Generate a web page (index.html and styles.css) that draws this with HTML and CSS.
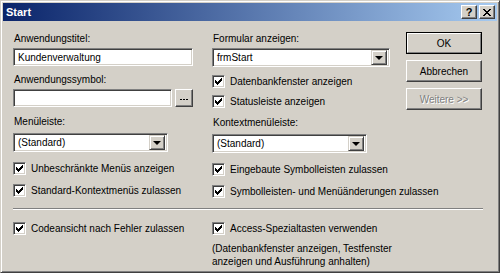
FILE: index.html
```html
<!DOCTYPE html>
<html>
<head>
  <meta charset="UTF-8">
  <title>Start</title>
  <link rel="stylesheet" href="styles.css">
</head>
<body>
<div class="window">
  <div class="titlebar">
    <span class="title">Start</span>
    <div class="caption-buttons">
      <span class="cap">?</span>
      <span class="cap">
        <svg width="8" height="7" viewBox="0 0 8 7" shape-rendering="crispEdges"><path d="M0 0h2v1h-2z M6 0h2v1h-2z M1 1h2v1h-2z M5 1h2v1h-2z M2 2h4v1h-4z M3 3h2v1h-2z M2 4h4v1h-4z M1 5h2v1h-2z M5 5h2v1h-2z M0 6h2v1h-2z M6 6h2v1h-2z" fill="#000"/></svg>
      </span>
    </div>
  </div>

  <div class="content">
    <div class="top">
      <div class="form">
        <div class="col">
          <label class="lbl">Anwendungstitel:</label>
          <input class="field mt3" type="text" value="Kundenverwaltung">
          <label class="lbl mt7">Anwendungssymbol:</label>
          <div class="browse-row mt3">
            <input class="field field-short" type="text" value="">
            <span class="btn btn-small"><svg width="8" height="1" viewBox="0 0 8 1" shape-rendering="crispEdges"><path d="M0 0h2v1H0z M3 0h2v1H3z M6 0h2v1H6z"/></svg></span>
          </div>
          <label class="lbl mt8">Menüleiste:</label>
          <div class="combo combo-short mt5"><span class="combo-text">(Standard)</span><span class="drop"><i class="arrow"></i></span></div>
          <div class="chk mt10"><span class="box"><svg width="11" height="11" viewBox="1 1 11 11" shape-rendering="crispEdges"><path d="M9 3h1v1H9z M8 4h2v1H8z M3 5h1v1H3z M7 5h3v1H7z M3 6h2v1H3z M6 6h3v1H6z M3 7h5v1H3z M4 8h3v1H4z M5 9h1v1H5z"/></svg></span>Unbeschränkte Menüs anzeigen</div>
          <div class="chk mt9"><span class="box"><svg width="11" height="11" viewBox="1 1 11 11" shape-rendering="crispEdges"><path d="M9 3h1v1H9z M8 4h2v1H8z M3 5h1v1H3z M7 5h3v1H7z M3 6h2v1H3z M6 6h3v1H6z M3 7h5v1H3z M4 8h3v1H4z M5 9h1v1H5z"/></svg></span>Standard-Kontextmenüs zulassen</div>
        </div>
        <div class="col">
          <label class="lbl">Formular anzeigen:</label>
          <div class="combo mt3"><span class="combo-text">frmStart</span><span class="drop"><i class="arrow"></i></span></div>
          <div class="chk mt8"><span class="box"><svg width="11" height="11" viewBox="1 1 11 11" shape-rendering="crispEdges"><path d="M9 3h1v1H9z M8 4h2v1H8z M3 5h1v1H3z M7 5h3v1H7z M3 6h2v1H3z M6 6h3v1H6z M3 7h5v1H3z M4 8h3v1H4z M5 9h1v1H5z"/></svg></span>Datenbankfenster anzeigen</div>
          <div class="chk mt7"><span class="box"><svg width="11" height="11" viewBox="1 1 11 11" shape-rendering="crispEdges"><path d="M9 3h1v1H9z M8 4h2v1H8z M3 5h1v1H3z M7 5h3v1H7z M3 6h2v1H3z M6 6h3v1H6z M3 7h5v1H3z M4 8h3v1H4z M5 9h1v1H5z"/></svg></span>Statusleiste anzeigen</div>
          <label class="lbl mt8">Kontextmenüleiste:</label>
          <div class="combo combo-short mt5"><span class="combo-text">(Standard)</span><span class="drop"><i class="arrow"></i></span></div>
          <div class="chk mt10"><span class="box"><svg width="11" height="11" viewBox="1 1 11 11" shape-rendering="crispEdges"><path d="M9 3h1v1H9z M8 4h2v1H8z M3 5h1v1H3z M7 5h3v1H7z M3 6h2v1H3z M6 6h3v1H6z M3 7h5v1H3z M4 8h3v1H4z M5 9h1v1H5z"/></svg></span>Eingebaute Symbolleisten zulassen</div>
          <div class="chk mt9"><span class="box"><svg width="11" height="11" viewBox="1 1 11 11" shape-rendering="crispEdges"><path d="M9 3h1v1H9z M8 4h2v1H8z M3 5h1v1H3z M7 5h3v1H7z M3 6h2v1H3z M6 6h3v1H6z M3 7h5v1H3z M4 8h3v1H4z M5 9h1v1H5z"/></svg></span>Symbolleisten- und Menüänderungen zulassen</div>
        </div>
      </div>
      <div class="actions">
        <span class="btn btn-default"><span class="btn-inner">OK</span></span>
        <span class="btn">Abbrechen</span>
        <span class="btn btn-disabled">Weitere &gt;&gt;</span>
      </div>
    </div>

    <div class="sep"></div>

    <div class="bottom">
      <div class="col">
        <div class="chk mt12"><span class="box"><svg width="11" height="11" viewBox="1 1 11 11" shape-rendering="crispEdges"><path d="M9 3h1v1H9z M8 4h2v1H8z M3 5h1v1H3z M7 5h3v1H7z M3 6h2v1H3z M6 6h3v1H6z M3 7h5v1H3z M4 8h3v1H4z M5 9h1v1H5z"/></svg></span>Codeansicht nach Fehler zulassen</div>
      </div>
      <div class="col">
        <div class="chk mt12"><span class="box"><svg width="11" height="11" viewBox="1 1 11 11" shape-rendering="crispEdges"><path d="M9 3h1v1H9z M8 4h2v1H8z M3 5h1v1H3z M7 5h3v1H7z M3 6h2v1H3z M6 6h3v1H6z M3 7h5v1H3z M4 8h3v1H4z M5 9h1v1H5z"/></svg></span>Access-Spezialtasten verwenden</div>
        <p class="note">(Datenbankfenster anzeigen, Testfenster<br>anzeigen und Ausführung anhalten)</p>
      </div>
    </div>
  </div>
</div>
</body>
</html>
```

FILE: styles.css
```css
*{
  box-sizing: border-box;
}
html, body{
  margin: 0;
  padding: 0;
}
body{
  width: 500px;
  height: 273px;
  background-color: #d4d0c8;
  font-family: "Liberation Sans", Arial, sans-serif;
  font-size: 10px;
  color: #000;
}
.window{
  width: 500px;
  height: 273px;
  background-color: #d4d0c8;
  border: 1px solid;
  border-color: #d4d0c8 #404040 #404040 #d4d0c8;
  box-shadow: inset 1px 1px #fff, inset -1px -1px #808080;
  padding: 2px;
}
.titlebar{
  height: 18px;
  display: flex;
  align-items: center;
  justify-content: space-between;
  background: linear-gradient(to right, #0a246a, #a6caf0);
  padding: 0 2px 0 3px;
}
.title{
  color: #fff;
  font-weight: bold;
  font-size: 11px;
}
.caption-buttons{
  display: flex;
  gap: 2px;
}
.cap{
  width: 16px;
  height: 14px;
  display: flex;
  align-items: center;
  justify-content: center;
  background-color: #d4d0c8;
  border: 1px solid;
  border-color: #fff #404040 #404040 #fff;
  box-shadow: inset -1px -1px #808080;
  font-weight: bold;
  font-size: 11px;
  line-height: 1;
}
.content{
  padding: 11px 0 0 10px;
}
.top{
  display: flex;
}
.form{
  display: grid;
  grid-template-columns: 180px 178px;
  column-gap: 19px;
}
.col{
  display: flex;
  flex-direction: column;
  align-items: flex-start;
}
.lbl{
  line-height: 13px;
  height: 13px;
  margin-left: 1px;
}
.mt3{ margin-top: 3px; }
.mt5{ margin-top: 5px; }
.mt7{ margin-top: 7px; }
.mt8{ margin-top: 8px; }
.mt9{ margin-top: 9px; }
.mt10{ margin-top: 10px; }
.mt12{ margin-top: 12px; }
.field, .combo{
  height: 18px;
  width: 180px;
  background-color: #fff;
  border: 1px solid;
  border-color: #808080 #fff #fff #808080;
  box-shadow: inset 1px 1px #404040, inset -1px -1px #d4d0c8;
  font-family: inherit;
  font-size: 10px;
  padding: 0 4px;
  outline: none;
  color: #000;
}
.field{
  margin-bottom: 0;
  margin-left: 0;
  margin-right: 0;
}
.field-short{
  width: 159px;
}
.browse-row{
  display: flex;
  gap: 3px;
}
.combo{
  width: 178px;
  height: 19px;
  display: flex;
  align-items: center;
  justify-content: space-between;
  padding: 2px;
}
.combo-short{
  width: 155px;
}
.combo-text{
  padding-left: 2px;
}
.drop{
  width: 16px;
  height: 15px;
  background-color: #d4d0c8;
  border: 1px solid;
  border-color: #d4d0c8 #404040 #404040 #d4d0c8;
  box-shadow: inset 1px 1px #fff, inset -1px -1px #808080;
  display: flex;
  align-items: center;
  justify-content: center;
}
.arrow{
  width: 0;
  height: 0;
  border-left: 4px solid transparent;
  border-right: 4px solid transparent;
  border-top: 4px solid #000;
}
.chk{
  display: flex;
  align-items: center;
  height: 13px;
  line-height: 13px;
  white-space: nowrap;
}
.box{
  width: 13px;
  height: 13px;
  flex: none;
  background-color: #fff;
  border: 1px solid;
  border-color: #808080 #fff #fff #808080;
  box-shadow: inset 1px 1px #404040, inset -1px -1px #d4d0c8;
  margin-right: 5px;
  display: flex;
}
.box svg{
  display: block;
}
.actions{
  display: flex;
  flex-direction: column;
  gap: 6px;
  margin-left: 16px;
}
.btn{
  display: flex;
  align-items: center;
  justify-content: center;
  width: 76px;
  height: 22px;
  background-color: #d4d0c8;
  border: 1px solid;
  border-color: #fff #404040 #404040 #fff;
  box-shadow: inset -1px -1px #808080;
}
.btn-small{
  width: 18px;
  height: 18px;
  padding-top: 3px;
}
.btn-default{
  border: 1px solid #000;
  box-shadow: none;
}
.btn-inner{
  width: 100%;
  height: 100%;
  display: flex;
  align-items: center;
  justify-content: center;
  border: 1px solid;
  border-color: #fff #808080 #808080 #fff;
}
.btn-disabled{
  color: #808080;
  text-shadow: 1px 1px #fff;
}
.sep{
  width: 470px;
  height: 2px;
  border-top: 1px solid #808080;
  border-bottom: 1px solid #fff;
  margin-top: 10px;
}
.bottom{
  display: grid;
  grid-template-columns: 180px 250px;
  column-gap: 19px;
}
.note{
  margin: 7px 0 0 0;
  line-height: 13px;
}
```
